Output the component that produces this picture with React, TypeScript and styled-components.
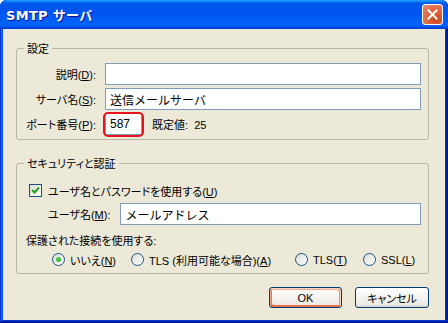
import React from "react";
import styled, { createGlobalStyle } from "styled-components";

const GlobalStyle = createGlobalStyle`
  html, body { margin: 0; padding: 0; background: #ffffff; }
  body {
    font-family: "Liberation Sans", "Noto Sans CJK JP", sans-serif;
    font-size: 11px;
    color: #000;
  }
  #root { width: 448px; height: 323px; }
`;

const Window = styled.div`
  width: 448px;
  height: 323px;
  box-sizing: border-box;
  display: flex;
  flex-direction: column;
  background: #0831d9;
  border-radius: 7px 7px 0 0;
  overflow: hidden;
  box-shadow: inset -1px -1px #00138c, inset 1px 1px #0831d9,
    inset -2px -2px #001ea0, inset 2px 2px #166aee,
    inset -3px -3px #003bda, inset 3px 3px #0855dd;
`;

const TitleBar = styled.div`
  height: 29px;
  box-sizing: border-box;
  flex: none;
  display: flex;
  align-items: center;
  justify-content: space-between;
  padding: 0 5px 0 6px;
  background: linear-gradient(
    180deg,
    #3d95ff 0,
    #0997ff 1px,
    #0058ee 3px,
    #0053ee 40%,
    #0062f8 80%,
    #0060fb 90%,
    #0046dd 94%,
    #003dd7 100%
  );
  border-radius: 7px 7px 0 0;
`;

const Title = styled.span`
  color: #fff;
  font-family: "DejaVu Sans", "Noto Sans CJK JP", sans-serif;
  font-weight: bold;
  font-size: 13px;
  letter-spacing: 0.3px;
  text-shadow: 1px 1px #0f1089;
  padding-bottom: 1px;
`;

const CloseButton = styled.div`
  width: 21px;
  height: 21px;
  box-sizing: border-box;
  border: 1px solid #fff;
  border-radius: 3px;
  background: radial-gradient(circle at 70% 75%, #cc4619 0%, #e0643f 45%, #ea8b6e 100%);
  display: flex;
  align-items: center;
  justify-content: center;
  margin-top: -1px;
`;

const Client = styled.div`
  flex: 1;
  margin: 0 3px 3px;
  background: #ece9d8;
  display: flex;
  flex-direction: column;
  padding: 19px 16px 0 13px;
`;

const GroupBox = styled.div<{ $top?: number }>`
  position: relative;
  border: 1px solid #b9b6a6;
  border-radius: 3px;
  margin-top: ${(p) => p.$top ?? 0}px;
  padding: ${(p) => (p.$top ? "18px 7px 5px 9px" : "14px 7px 4px 0")};
  display: flex;
  flex-direction: column;
`;

const Legend = styled.span`
  position: absolute;
  left: 7px;
  top: -9px;
  padding: 0 3px;
  background: #ece9d8;
  line-height: 16px;
  font-family: "Noto Sans CJK JP", sans-serif;
  font-feature-settings: "palt";
`;

const FieldRow = styled.div<{ $gap?: number }>`
  display: grid;
  grid-template-columns: 79px 1fr;
  column-gap: 9px;
  align-items: center;
  margin-top: ${(p) => p.$gap ?? 0}px;
`;

const Label = styled.label`
  text-align: right;
  white-space: nowrap;
  font-family: "Liberation Sans", "Noto Sans CJK JP", sans-serif;
  font-feature-settings: "palt";
`;

const TextBox = styled.div<{ $w?: number }>`
  height: 22px;
  box-sizing: border-box;
  border: 1px solid #7f9db9;
  background: #fff;
  padding: 0 4px;
  display: flex;
  align-items: center;
  font-size: 12px;
  font-family: "Liberation Sans", "Noto Sans CJK JP", sans-serif;
  ${(p) => (p.$w ? `width: ${p.$w}px;` : "")}
`;

const PortLine = styled.div`
  display: flex;
  align-items: center;
  gap: 10px;
`;

const Highlight = styled.div`
  position: relative;
`;

const Ring = styled.div`
  position: absolute;
  left: -2px;
  right: -2px;
  top: -1px;
  bottom: -2px;
  border: 2px solid #e8141c;
  border-radius: 5px;
  pointer-events: none;
`;

const Plain = styled.span`
  font-family: "Liberation Sans", "Noto Sans CJK JP", sans-serif;
  font-feature-settings: "palt";
  white-space: nowrap;
`;

const CheckRow = styled.div`
  display: flex;
  align-items: center;
  gap: 6px;
  height: 17px;
  margin-left: 3px;
`;

const CheckBox = styled.div`
  width: 13px;
  height: 13px;
  box-sizing: border-box;
  border: 1px solid #1c5180;
  background: linear-gradient(135deg, #dcdcd7, #fff);
  display: flex;
  align-items: center;
  justify-content: center;
`;

const UserRow = styled.div`
  display: flex;
  align-items: center;
  gap: 10px;
  margin: 4px 0 0 22px;
`;

const UserBox = styled(TextBox)`
  flex: 1;
`;

const SubHead = styled.div`
  margin-top: 8px;
  line-height: 16px;
`;

const RadioRow = styled.div`
  display: grid;
  grid-template-columns: 79px 164px 68px auto;
  align-items: center;
  margin: 2px 0 0 26px;
  height: 17px;
`;

const RadioItem = styled.div`
  display: flex;
  align-items: center;
  gap: 5px;
`;

const Radio = styled.div<{ $on?: boolean }>`
  width: 13px;
  height: 13px;
  box-sizing: border-box;
  border-radius: 50%;
  border: 1px solid #1c5180;
  background: linear-gradient(135deg, #dcdcd7, #fff);
  display: flex;
  align-items: center;
  justify-content: center;
  &::after {
    content: "";
    display: ${(p) => (p.$on ? "block" : "none")};
    width: 5px;
    height: 5px;
    border-radius: 50%;
    background: radial-gradient(circle at 40% 40%, #55d551, #21a121);
  }
`;

const ButtonBar = styled.div`
  display: flex;
  justify-content: flex-end;
  gap: 13px;
  margin-top: 13px;
`;

const Button = styled.div<{ $default?: boolean; $w: number }>`
  width: ${(p) => p.$w}px;
  height: 21px;
  box-sizing: border-box;
  border: 1px solid #003c74;
  border-radius: 3px;
  background: linear-gradient(180deg, #fff, #ecebe6 86%, #d6d0c5);
  display: flex;
  align-items: center;
  justify-content: center;
  font-family: "Liberation Sans", "Noto Sans CJK JP", sans-serif;
  font-feature-settings: "palt";
  ${(p) =>
    p.$default
      ? `box-shadow: inset -1px 1px #fbd6c4, inset 1px 2px #f3a98b, inset -2px 2px #ee9270, inset 2px -2px #e8704d;`
      : ""}
`;

const U = styled.u`
  text-decoration: underline;
  text-underline-offset: 1px;
`;

export default function App() {
  return (
    <>
      <GlobalStyle />
      <Window>
        <TitleBar>
          <Title>SMTP サーバ</Title>
          <CloseButton>
            <svg width="11" height="11" viewBox="0 0 11 11">
              <path d="M1.5 1.5 L9.5 9.5 M9.5 1.5 L1.5 9.5" stroke="#fff" strokeWidth="2" strokeLinecap="square" />
            </svg>
          </CloseButton>
        </TitleBar>
        <Client>
          <GroupBox>
            <Legend>設定</Legend>
            <FieldRow>
              <Label>
                説明(<U>D</U>):
              </Label>
              <TextBox />
            </FieldRow>
            <FieldRow $gap={3}>
              <Label>
                サーバ名(<U>S</U>):
              </Label>
              <TextBox>送信メールサーバ</TextBox>
            </FieldRow>
            <FieldRow $gap={3}>
              <Label>
                ポート番号(<U>P</U>):
              </Label>
              <PortLine>
                <Highlight>
                  <TextBox $w={37}>587</TextBox>
                  <Ring />
                </Highlight>
                <Plain>既定値:&nbsp; 25</Plain>
              </PortLine>
            </FieldRow>
          </GroupBox>
          <GroupBox $top={23}>
            <Legend>セキュリティと認証</Legend>
            <CheckRow>
              <CheckBox>
                <svg width="9" height="9" viewBox="0 0 9 9">
                  <path d="M1 4 L3.5 6.5 L8 1.5" stroke="#21a121" strokeWidth="2" fill="none" />
                </svg>
              </CheckBox>
              <Plain>
                ユーザ名とパスワードを使用する(<U>U</U>)
              </Plain>
            </CheckRow>
            <UserRow>
              <Plain>
                ユーザ名(<U>M</U>):
              </Plain>
              <UserBox>メールアドレス</UserBox>
            </UserRow>
            <SubHead>
              <Plain>保護された接続を使用する:</Plain>
            </SubHead>
            <RadioRow>
              <RadioItem>
                <Radio $on />
                <Plain>
                  いいえ(<U>N</U>)
                </Plain>
              </RadioItem>
              <RadioItem>
                <Radio />
                <Plain>
                  TLS (利用可能な場合)(<U>A</U>)
                </Plain>
              </RadioItem>
              <RadioItem>
                <Radio />
                <Plain>
                  TLS(<U>T</U>)
                </Plain>
              </RadioItem>
              <RadioItem>
                <Radio />
                <Plain>
                  SSL(<U>L</U>)
                </Plain>
              </RadioItem>
            </RadioRow>
          </GroupBox>
          <ButtonBar>
            <Button $default $w={73}>OK</Button>
            <Button $w={74}>キャンセル</Button>
          </ButtonBar>
        </Client>
      </Window>
    </>
  );
}
